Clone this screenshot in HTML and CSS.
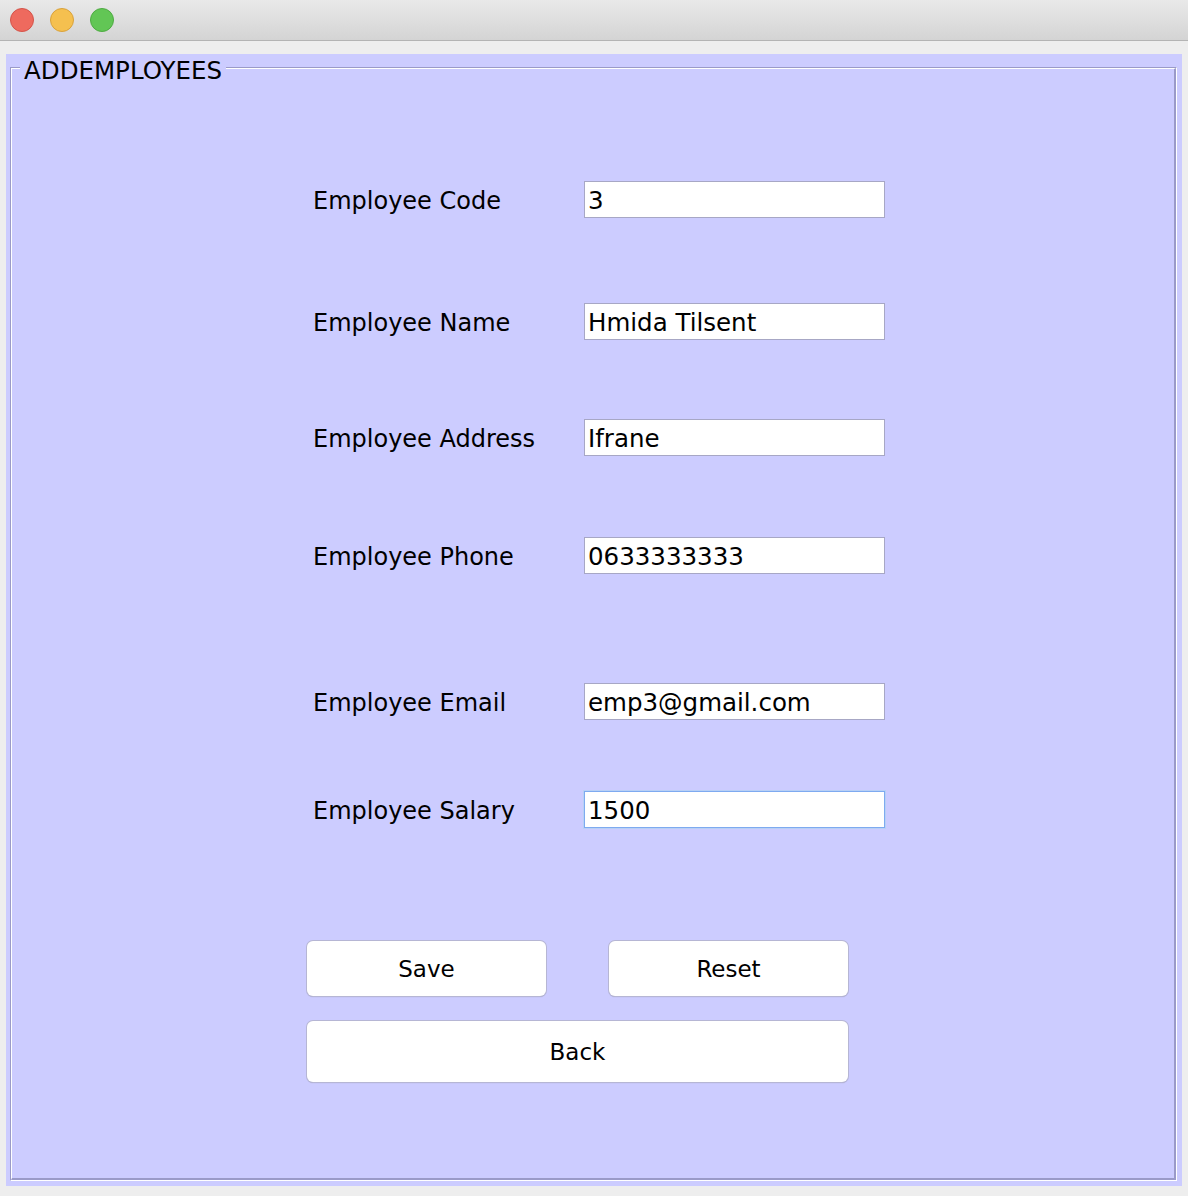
FILE: index.html
```html
<!DOCTYPE html>
<html>
<head>
<meta charset="utf-8">
<link rel="stylesheet" href="styles.css">
</head>
<body>
<div class="titlebar">
  <span class="light red"></span>
  <span class="light yellow"></span>
  <span class="light green"></span>
</div>
<div class="panel">
  <div class="etched">
    <div class="etched-inner">
      <div class="legend">ADDEMPLOYEES</div>
      <div class="form">
        <div class="row r1"><label>Employee Code</label><div class="field">3</div></div>
        <div class="row r2"><label>Employee Name</label><div class="field">Hmida Tilsent</div></div>
        <div class="row r3"><label>Employee Address</label><div class="field">Ifrane</div></div>
        <div class="row r4"><label>Employee Phone</label><div class="field">0633333333</div></div>
        <div class="row r5"><label>Employee Email</label><div class="field">emp3@gmail.com</div></div>
        <div class="row r6"><label>Employee Salary</label><div class="field focus">1500</div></div>
        <div class="buttons">
          <div class="btn">Save</div>
          <div class="btn">Reset</div>
          <div class="btn wide">Back</div>
        </div>
      </div>
    </div>
  </div>
</div>
</body>
</html>
```
FILE: styles.css
```css
html, body {
  margin: 0;
  padding: 0;
  background: #eeeeee;
  font-family: "DejaVu Sans", "Noto Sans", sans-serif;
  color: #000;
}
.titlebar {
  height: 41px;
  border-bottom: 1px solid #b4b4b4;
  background: linear-gradient(#e9e9e9, #d4d4d4);
  display: flex;
  align-items: center;
  gap: 16px;
  padding-left: 10px;
  box-sizing: border-box;
}
.light {
  width: 24px;
  height: 24px;
  border-radius: 50%;
  box-sizing: border-box;
}
.red { background: #ee6a5e; border: 1px solid #d4544a; }
.yellow { background: #f5c04f; border: 1px solid #d9a23b; }
.green { background: #62c655; border: 1px solid #4fab43; }
.panel {
  margin: 13px 6px 0 6px;
  height: 1132px;
  background: #ccccff;
  padding: 13px 5px 5px 4px;
  box-sizing: border-box;
}
.etched {
  height: 100%;
  box-sizing: border-box;
  border-top: 1px solid #9a9ac8;
  border-left: 1px solid #9a9ac8;
  border-right: 1px solid #ffffff;
  border-bottom: 1px solid #ffffff;
}
.etched-inner {
  position: relative;
  height: 100%;
  box-sizing: border-box;
  border-top: 1px solid #ffffff;
  border-left: 1px solid #ffffff;
  border-right: 2px solid #9a9ac8;
  border-bottom: 2px solid #9a9ac8;
}
.legend {
  position: absolute;
  left: 8px;
  top: -12px;
  padding: 0 4px 0 4px;
  background: #ccccff;
  font-size: 24.5px;
  line-height: 28px;
}
.form {
  padding: 112px 0 0 301px;
}
.row {
  display: grid;
  grid-template-columns: 271px 301px;
  align-items: center;
  height: 37px;
}
.r2 { margin-top: 85px; }
.r3 { margin-top: 79px; }
.r4 { margin-top: 81px; }
.r5 { margin-top: 109px; }
.r6 { margin-top: 71px; }
label {
  font-size: 24px;
  padding-top: 2px;
}
.field {
  height: 37px;
  box-sizing: border-box;
  background: #fff;
  border: 1px solid #a7a7c5;
  font-size: 24.5px;
  line-height: 37px;
  padding-left: 3px;
}
.field.focus {
  border: 1px solid #7eaaf0;
  box-shadow: 0 0 0 1px #b8d0f6;
}
.buttons {
  margin: 113px 0 0 -6px;
  display: grid;
  grid-template-columns: 239px 239px;
  column-gap: 63px;
  row-gap: 25px;
  width: 541px;
}
.btn {
  height: 55px;
  background: #fff;
  border-radius: 6px;
  box-shadow: 0 0 0 1px #b6b6d4, 0 1px 1px #9a9ab8;
  display: flex;
  align-items: center;
  justify-content: center;
  font-size: 23px;
}
.btn.wide {
  grid-column: 1 / 3;
  height: 61px;
}
```
